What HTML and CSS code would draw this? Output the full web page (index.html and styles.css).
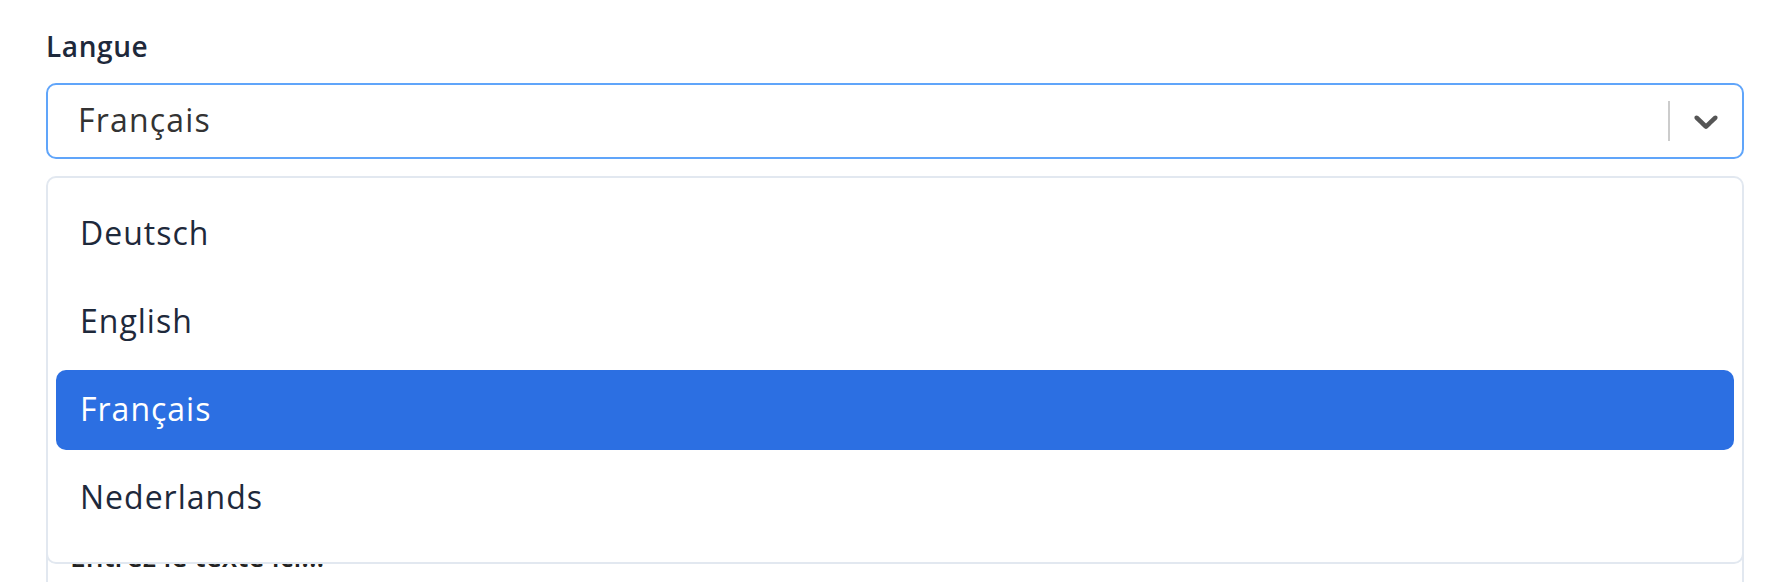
FILE: index.html
```html
<!DOCTYPE html>
<html lang="fr">
<head>
<meta charset="utf-8">
<title>Langue</title>
<link rel="stylesheet" href="styles.css">
</head>
<body>
<div class="page">
  <div class="field">
    <label class="label">Langue</label>
    <div class="select">
      <div class="select-value">Français</div>
      <div class="indicators">
        <span class="separator"></span>
        <span class="dropdown-indicator">
          <svg width="40" height="40" viewBox="0 0 20 20" aria-hidden="true"><path d="M4.516 7.548c0.436-0.446 1.043-0.481 1.576 0l3.908 3.747 3.908-3.747c0.533-0.481 1.141-0.446 1.574 0 0.436 0.445 0.408 1.197 0 1.615-0.406 0.418-4.695 4.502-4.695 4.502-0.217 0.223-0.502 0.335-0.787 0.335s-0.57-0.112-0.789-0.335c0 0-4.287-4.084-4.695-4.502s-0.436-1.17 0-1.615z"></path></svg>
        </span>
      </div>
    </div>
  </div>
  <div class="field field-text">
    <div class="textarea">Entrez le texte ici...</div>
  </div>
  <div class="menu">
    <div class="option">Deutsch</div>
    <div class="option">English</div>
    <div class="option option-selected">Français</div>
    <div class="option">Nederlands</div>
  </div>
</div>
</body>
</html>
```

FILE: styles.css
```css
html, body {
  margin: 0;
  padding: 0;
  background: #ffffff;
}

body {
  font-family: "Open Sans", "Noto Sans", sans-serif;
  overflow: hidden;
  height: 582px;
}

.page {
  position: relative;
  padding: 26px 48px 0 46px;
}

.field {
  display: flex;
  flex-direction: column;
}

.label {
  font-size: 28px;
  line-height: 40px;
  font-weight: 600;
  letter-spacing: 0.6px;
  color: #1e293b;
  margin-bottom: 17px;
}

.select {
  box-sizing: border-box;
  height: 76px;
  border: 2px solid #60a5fa;
  border-radius: 10px;
  display: flex;
  align-items: center;
  background: #ffffff;
}

.select-value {
  flex: 1;
  padding-left: 30px;
  padding-bottom: 2px;
  font-size: 32px;
  line-height: 44px;
  letter-spacing: 1.2px;
  color: #333333;
}

.indicators {
  display: flex;
  align-items: stretch;
  align-self: stretch;
}

.separator {
  width: 2px;
  margin: 16px 0;
  background: #cccccc;
}

.dropdown-indicator {
  width: 72px;
  display: flex;
  align-items: center;
  justify-content: center;
}

.dropdown-indicator svg {
  fill: #555555;
  display: block;
}

.field-text {
  margin-top: 351px;
}

.textarea {
  box-sizing: border-box;
  height: 200px;
  border: 2px solid #e2e8f0;
  border-radius: 10px;
  padding: 24px 22px;
  font-size: 28px;
  line-height: 40px;
  font-weight: 600;
  color: #222222;
}

.menu {
  position: absolute;
  top: 176px;
  left: 46px;
  right: 48px;
  box-sizing: border-box;
  background: #ffffff;
  border: 2px solid #e2e8f0;
  border-radius: 10px;
  padding: 16px 8px 24px 8px;
  display: flex;
  flex-direction: column;
  gap: 8px;
}

.option {
  height: 80px;
  box-sizing: border-box;
  padding: 0 24px 3px 24px;
  display: flex;
  align-items: center;
  font-size: 32px;
  letter-spacing: 1px;
  color: #1e293b;
  border-radius: 10px;
}

.option-selected {
  background: #2c6fe2;
  color: #ffffff;
}
```
